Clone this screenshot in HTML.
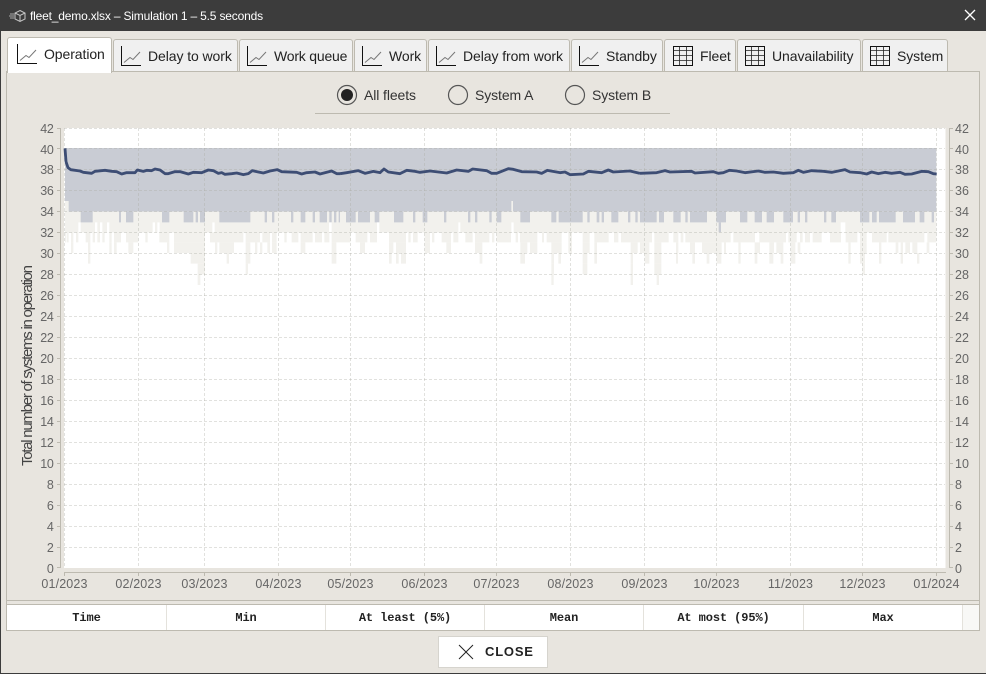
<!DOCTYPE html>
<html><head><meta charset="utf-8"><style>
html,body{margin:0;padding:0}
body{width:986px;height:674px;overflow:hidden;position:relative;background:#e8e5df;font-family:"Liberation Sans",sans-serif}
.a{position:absolute}
.tab{position:absolute;top:39px;height:33px;background:#f0f0f0;border:1px solid #bdbab0;border-radius:3px 3px 0 0;box-sizing:border-box}
.tl{position:absolute;top:47px;font-size:14px;line-height:18px;color:#222;white-space:nowrap;letter-spacing:-.08px}
.rl{position:absolute;top:86px;font-size:14px;line-height:18px;color:#333;white-space:nowrap;letter-spacing:-.1px}
.th{position:absolute;top:605px;height:25px;font:bold 12px/26px "Liberation Mono",monospace;color:#222;text-align:center;letter-spacing:-.1px}
svg text{font-family:"Liberation Sans",sans-serif}
</style></head><body>
<div class="a" style="left:0;top:0;width:986px;height:31px;background:#3c3c3c"></div>
<div class="a" style="left:0;top:31px;width:1px;height:643px;background:#3c3c3c"></div>
<div class="a" style="left:0;top:673px;width:986px;height:1px;background:#3c3c3c"></div>
<svg class="a" style="left:8px;top:7px" width="18" height="18" viewBox="0 0 18 18" fill="none" stroke="#c8c8c8"><path d="M12 3.500l5 2.500v6l-5 2.500-5-2.500v-6zM7 6l5 2.500 5-2.500M12 8.500v6"/><path d="M2 7h4M1 9h5M2 11h4" stroke="#aaa"/></svg>
<div class="a" style="left:30px;top:8px;font-size:12px;line-height:16px;color:#fff;white-space:nowrap;letter-spacing:-.18px">fleet_demo.xlsx – Simulation 1 – 5.5 seconds</div>
<svg class="a" style="left:964px;top:9px" width="12" height="12" fill="none" stroke="#fff" stroke-width="1.300"><path d="M1 1L11 11M11 1L1 11"/></svg>

<div class="a" style="left:6px;top:71px;width:974px;height:560px;box-sizing:border-box;border:1px solid #bdbab0"></div>

<div class="tab" style="left:113px;width:125px"></div>
<div class="tab" style="left:239px;width:114px"></div>
<div class="tab" style="left:354px;width:73px"></div>
<div class="tab" style="left:428px;width:142px"></div>
<div class="tab" style="left:571px;width:92px"></div>
<div class="tab" style="left:664px;width:72px"></div>
<div class="tab" style="left:737px;width:124px"></div>
<div class="tab" style="left:862px;width:86px"></div>
<div class="a" style="left:7px;top:37px;width:105px;height:36px;background:#fff;border:1px solid #bdbab0;border-bottom:none;border-radius:3px 3px 0 0;box-sizing:border-box"></div>

<svg class="a" style="left:0;top:0" width="986" height="80" fill="none">
<defs>
<g id="c"><path d="M.5 0V19.500H20" stroke="#111" stroke-width="1"/><path d="M3 16.500L9 11.500L12 13.500L19 6" stroke="#777" stroke-width="1"/></g>
<g id="t"><path d="M.5 .5H19.500V19.500H.5Z" stroke="#111"/><path d="M.5 4.500H19.500M.5 9.500H19.500M.5 14.500H19.500M6.500 .5V19.500M13.500 .5V19.500" stroke="#222" stroke-width=".8"/></g>
</defs>
<use href="#c" x="17" y="44"/><use href="#c" x="121" y="46"/><use href="#c" x="247" y="46"/><use href="#c" x="362" y="46"/><use href="#c" x="436" y="46"/><use href="#c" x="579" y="46"/>
<use href="#t" x="673" y="46"/><use href="#t" x="745" y="46"/><use href="#t" x="870" y="46"/>
</svg>
<div class="tl" style="left:44px;top:45px">Operation</div>
<div class="tl" style="left:148px">Delay to work</div>
<div class="tl" style="left:274px;letter-spacing:-.2px">Work queue</div>
<div class="tl" style="left:389px">Work</div>
<div class="tl" style="left:463px">Delay from work</div>
<div class="tl" style="left:606px">Standby</div>
<div class="tl" style="left:700px">Fleet</div>
<div class="tl" style="left:772px">Unavailability</div>
<div class="tl" style="left:897px">System</div>

<svg class="a" style="left:330px;top:80px" width="260" height="30" fill="none"><circle cx="17" cy="15" r="9.500" stroke="#555" stroke-width="1.200"/><circle cx="17" cy="15" r="6" fill="#222"/><circle cx="128" cy="15" r="9.500" stroke="#555" stroke-width="1.200"/><circle cx="245" cy="15" r="9.500" stroke="#555" stroke-width="1.200"/></svg>
<div class="rl" style="left:364px">All fleets</div>
<div class="rl" style="left:475px">System A</div>
<div class="rl" style="left:592px">System B</div>
<div class="a" style="left:315px;top:113px;width:355px;height:1px;background:#bdbab0"></div>

<svg class="a" style="left:0;top:0" width="986" height="600" fill="none">
<rect x="64" y="128" width="881.500" height="440" fill="#fff"/>
<rect x="65" y="148" width="871.300" height="63.700" fill="#c9ccd4"/>
<rect x="65" y="211.700" width="871.300" height="20.800" fill="#f2f1ed"/>
<g transform="translate(40 125) scale(.33333)">
<path d="M75 244H86" stroke="#f2f1ed" stroke-width="32"/>
<path d="M122 276H158M237 276H243M258 276H280M366 276H388M431 276H460M467 276H474M480 276H495M538 276H631M674 276H681M696 276H703M753 276H760M782 276H796M818 276H825M839 276H861M868 276H875M882 276H889M896 276H900" stroke="#c9ccd4" stroke-width="32"/>
<path d="M115 307H122M165 307H172M180 307H187M201 307H208M338 307H345M352 307H359M517 307H524M867 307H875" stroke="#fff" stroke-width="30"/>
<path d="M75 337H78M80 337H86M93 337H100M108 337H115M137 337H151M158 337H165M172 337H180M187 337H194M208 337H215M222 337H243M258 337H295M316 337H323M358 337H388M402 337H495M510 337H610M617 337H660M667 337H690M696 337H710M733 337H740M755 337H775M782 337H818M825 337H846M853 337H868M875 337H900" stroke="#f2f1ed" stroke-width="30"/>
<path d="M93 368H100M144 368H151M208 368H215M222 368H230M265 368H280M381 368H388M402 368H495M525 368H532M538 368H582M617 368H631M645 368H652M660 368H667M682 368H690M696 368H710M782 368H796M875 368H889" stroke="#f2f1ed" stroke-width="32"/>
<path d="M144 400H151M452 400H495M560 400H567M617 400H631M875 400H889" stroke="#f2f1ed" stroke-width="32"/>
<path d="M473 432H495M617 432H624" stroke="#f2f1ed" stroke-width="32"/>
<path d="M473 464H481" stroke="#f2f1ed" stroke-width="32"/>
</g>
<g transform="translate(340 125) scale(.33333)">
<path d="M514 244H519" stroke="#f2f1ed" stroke-width="32"/>
<path d="M18 276H47M54 276H90M104 276H118M162 276H190M219 276H226M248 276H262M312 276H319M384 276H391M405 276H412M448 276H455M470 276H484M541 276H570M634 276H649M656 276H728M742 276H749M770 276H778M785 276H792M814 276H835M864 276H871M886 276H893" stroke="#c9ccd4" stroke-width="32"/>
<path d="M111 307H118M355 307H361M514 307H521" stroke="#fff" stroke-width="30"/>
<path d="M0 337H32M47 337H82M90 337H111M147 337H198M205 337H212M219 337H233M254 337H270M276 337H283M305 337H333M340 337H355M376 337H398M405 337H448M456 337H463M470 337H513M527 337H534M540 337H592M606 337H612M620 337H665M685 337H696M728 337H749M763 337H806M822 337H835M843 337H900" stroke="#f2f1ed" stroke-width="30"/>
<path d="M60 368H75M147 368H160M168 368H198M254 368H270M319 368H333M405 368H427M541 368H562M570 368H592M634 368H665M685 368H696M728 368H749M763 368H771M872 368H893" stroke="#f2f1ed" stroke-width="32"/>
<path d="M147 400H155M168 400H176M183 400H198M419 400H427M541 400H555M634 400H642M655 400H663M728 400H742M763 400H771M872 400H879" stroke="#f2f1ed" stroke-width="32"/>
<path d="M634 432H642M728 432H742M872 432H879" stroke="#f2f1ed" stroke-width="32"/>
<path d="M634 464H641M872 464H879" stroke="#f2f1ed" stroke-width="32"/>
</g>
<g transform="translate(640 125) scale(.33333)">
<path d="M0 276H50M57 276H72M100 276H122M136 276H143M150 276H201M229 276H258M300 276H322M344 276H366M380 276H402M430 276H459M473 276H480M495 276H502M552 276H559M574 276H588M660 276H688M696 276H710M717 276H767M789 276H825M839 276H853M875 276H882" stroke="#c9ccd4" stroke-width="32"/>
<path d="M236 307H243" stroke="#c9ccd4" stroke-width="30"/>
<path d="M602 307H616" stroke="#fff" stroke-width="30"/>
<path d="M0 337H36M43 337H86M100 337H115M122 337H130M136 337H272M280 337H345M358 337H438M445 337H470M480 337H488M495 337H510M518 337H545M570 337H603M617 337H652M660 337H680M696 337H740M745 337H853M862 337H889" stroke="#f2f1ed" stroke-width="30"/>
<path d="M0 368H28M43 368H64M108 368H115M150 368H165M186 368H245M252 368H258M295 368H302M344 368H360M388 368H402M409 368H430M452 368H466M473 368H481M625 368H632M660 368H680M717 368H724M767 368H775M782 368H789M796 368H810M817 368H832M860 368H868" stroke="#f2f1ed" stroke-width="32"/>
<path d="M14 400H28M43 400H64M108 400H114M157 400H165M200 400H208M230 400H244M295 400H302M344 400H352M388 400H400M422 400H430M452 400H466M625 400H632M660 400H675M717 400H724M782 400H789M831 400H838" stroke="#f2f1ed" stroke-width="32"/>
<path d="M43 432H64M667 432H675" stroke="#f2f1ed" stroke-width="32"/>
<path d="M50 464H57" stroke="#f2f1ed" stroke-width="32"/>
</g>
<path d="M64 128.500H945M64 148.500H945M64 169.500H945M64 190.500H945M64 211.500H945M64 232.500H945M64 253.500H945M64 274.500H945M64 295.500H945M64 316.500H945M64 337.500H945M64 358.500H945M64 379.500H945M64 400.500H945M64 421.500H945M64 442.500H945M64 463.500H945M64 484.500H945M64 505.500H945M64 526.500H945M64 547.500H945" stroke="#a8a8a0" stroke-opacity=".35" stroke-dasharray="3 2"/>
<path d="M64.500 128V568M138.500 128V568M204.500 128V568M278.500 128V568M350.500 128V568M424.500 128V568M496.500 128V568M570.500 128V568M644.500 128V568M716.500 128V568M790.500 128V568M862.500 128V568M936.500 128V568" stroke="#a8a8a0" stroke-opacity=".35" stroke-dasharray="3 2"/>
<g stroke="#3d4d74" stroke-width="8.500" stroke-linejoin="round" fill="none">
<polyline transform="translate(40 125) scale(.33333)" points="75,70 78,110 84,128 92,134 120,138 130,142 155,145 165,139 195,136 215,139 230,140 245,147 260,143 285,143 292,135 310,139 320,136 335,137 345,132 360,135 375,146 385,146 405,140 420,140 445,147 460,142 485,143 505,135 520,137 535,145 545,143 555,148 575,146 590,144 610,149 625,146 637,137 655,141 670,144 690,138 712,134 725,140 770,142 785,147 800,143 825,141 840,147 875,138 890,146 900,146"/>
<polyline transform="translate(340 125) scale(.33333)" points="0,146 20,143 55,137 75,145 100,139 120,143 132,132 145,141 180,146 200,136 225,139 240,142 270,138 320,144 350,135 385,139 398,132 440,137 455,145 470,145 505,131 520,133 545,140 590,141 605,145 622,136 660,143 675,141 690,149 730,147 745,139 785,143 805,135 820,141 870,138 900,145"/>
<polyline transform="translate(640 125) scale(.33333)" points="0,145 50,143 75,137 90,141 155,139 165,144 220,140 235,145 250,143 268,136 290,138 315,143 355,138 375,142 400,141 430,145 460,143 475,136 490,142 515,137 550,139 575,142 615,134 630,141 660,143 680,147 695,141 715,146 735,142 755,145 780,142 795,148 815,147 845,139 865,140 880,146 890,147"/>
</g>
<path d="M60.500 128V568M949.500 128V568M64 572.500H946" stroke="#bdbab0"/>
<path d="M57 128.500H60M57 148.500H60M57 169.500H60M57 190.500H60M57 211.500H60M57 232.500H60M57 253.500H60M57 274.500H60M57 295.500H60M57 316.500H60M57 337.500H60M57 358.500H60M57 379.500H60M57 400.500H60M57 421.500H60M57 442.500H60M57 463.500H60M57 484.500H60M57 505.500H60M57 526.500H60M57 547.500H60M57 567.500H60M950 128.500H953M950 148.500H953M950 169.500H953M950 190.500H953M950 211.500H953M950 232.500H953M950 253.500H953M950 274.500H953M950 295.500H953M950 316.500H953M950 337.500H953M950 358.500H953M950 379.500H953M950 400.500H953M950 421.500H953M950 442.500H953M950 463.500H953M950 484.500H953M950 505.500H953M950 526.500H953M950 547.500H953M950 567.500H953M64.500 573V576M138.500 573V576M204.500 573V576M278.500 573V576M350.500 573V576M424.500 573V576M496.500 573V576M570.500 573V576M644.500 573V576M716.500 573V576M790.500 573V576M862.500 573V576M936.500 573V576" stroke="#bdbab0"/>
<g font-size="12.500" fill="#666" text-anchor="end" letter-spacing="-.3">
<text x="53.500" y="133">42</text><text x="53.500" y="154">40</text><text x="53.500" y="174">38</text><text x="53.500" y="195">36</text><text x="53.500" y="216">34</text><text x="53.500" y="237">32</text><text x="53.500" y="258">30</text><text x="53.500" y="279">28</text><text x="53.500" y="300">26</text><text x="53.500" y="321">24</text><text x="53.500" y="342">22</text><text x="53.500" y="363">20</text><text x="53.500" y="384">18</text><text x="53.500" y="405">16</text><text x="53.500" y="426">14</text><text x="53.500" y="447">12</text><text x="53.500" y="468">10</text><text x="53.500" y="489">8</text><text x="53.500" y="510">6</text><text x="53.500" y="531">4</text><text x="53.500" y="552">2</text><text x="53.500" y="573">0</text>
</g>
<g font-size="12.500" fill="#666">
<text x="955" y="133">42</text><text x="955" y="154">40</text><text x="955" y="174">38</text><text x="955" y="195">36</text><text x="955" y="216">34</text><text x="955" y="237">32</text><text x="955" y="258">30</text><text x="955" y="279">28</text><text x="955" y="300">26</text><text x="955" y="321">24</text><text x="955" y="342">22</text><text x="955" y="363">20</text><text x="955" y="384">18</text><text x="955" y="405">16</text><text x="955" y="426">14</text><text x="955" y="447">12</text><text x="955" y="468">10</text><text x="955" y="489">8</text><text x="955" y="510">6</text><text x="955" y="531">4</text><text x="955" y="552">2</text><text x="955" y="573">0</text>
</g>
<g font-size="12.500" fill="#666" text-anchor="middle" letter-spacing=".15">
<text x="64.500" y="588">01/2023</text><text x="138.500" y="588">02/2023</text><text x="204.500" y="588">03/2023</text><text x="278.500" y="588">04/2023</text><text x="350.500" y="588">05/2023</text><text x="424.500" y="588">06/2023</text><text x="496.500" y="588">07/2023</text><text x="570.500" y="588">08/2023</text><text x="644.500" y="588">09/2023</text><text x="716.500" y="588">10/2023</text><text x="790.500" y="588">11/2023</text><text x="862.500" y="588">12/2023</text><text x="936.500" y="588">01/2024</text>
</g>
<text transform="translate(32 466) rotate(-90)" font-size="15" fill="#444" textLength="201" lengthAdjust="spacing">Total number of systems in operation</text>
</svg>

<div class="a" style="left:6px;top:600px;width:974px;height:1px;background:#bdbab0"></div>
<div class="a" style="left:6px;top:604px;width:974px;height:27px;box-sizing:border-box;background:#fff;border:1px solid #bdbab0"></div>
<div class="a" style="left:963px;top:605px;width:16px;height:25px;background:#f8f8f6"></div>
<svg class="a" style="left:0;top:600px" width="986" height="32"><path d="M166.500 5V30M325.500 5V30M484.500 5V30M643.500 5V30M803.500 5V30M962.500 5V30" stroke="#e4e2dc"/></svg>
<div class="th" style="left:7px;width:159px">Time</div>
<div class="th" style="left:167px;width:158px">Min</div>
<div class="th" style="left:326px;width:158px">At least (5%)</div>
<div class="th" style="left:485px;width:158px">Mean</div>
<div class="th" style="left:644px;width:159px">At most (95%)</div>
<div class="th" style="left:804px;width:158px">Max</div>

<div class="a" style="left:438px;top:636px;width:110px;height:32px;box-sizing:border-box;background:#fff;border:1px solid #d6d4ce"></div>
<svg class="a" style="left:458px;top:644px" width="16" height="16" fill="none" stroke="#222" stroke-width="1"><path d="M1 1L15 15M15 1L1 15"/></svg>
<div class="a" style="left:485px;top:643px;font-size:13px;line-height:18px;font-weight:bold;letter-spacing:.8px;color:#222;white-space:nowrap">CLOSE</div>
</body></html>
